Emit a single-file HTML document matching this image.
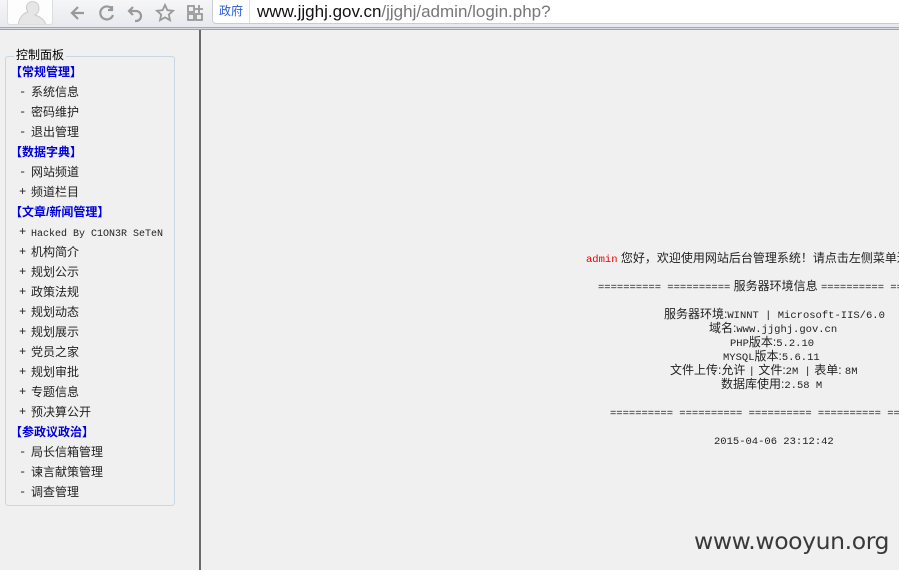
<!DOCTYPE html>
<html><head><meta charset="utf-8"><style>
*{margin:0;padding:0;box-sizing:border-box}
body{width:899px;height:570px;overflow:hidden;background:#f0f0f0;position:relative;font-family:"Liberation Sans","Noto Sans CJK SC",sans-serif;}
.tb{position:absolute;left:0;top:0;width:899px;height:28px;background:linear-gradient(#f6f6f8,#e8e9ee);border-bottom:1px solid #a8a8b0}
.tb2{position:absolute;left:0;top:28px;width:899px;height:2px;background:#d8dce2;border-bottom:1px solid #a0a0a8}
.av{position:absolute;left:7px;top:0;width:46px;height:25px;background:#fdfdfd;border:1px solid #ddd;border-top:none;border-radius:0 0 3px 3px;overflow:hidden}
.addr{position:absolute;left:212px;top:0;width:700px;height:24px;background:#fff;border:1px solid #c8ccd4;border-top:none;border-radius:0 0 0 4px}
.gov{position:absolute;left:0;top:0;width:37px;height:23px;border-right:1px solid #dde;font-size:12px;color:#2a5bd7;line-height:23px;text-align:center}
.url{position:absolute;left:44px;top:1px;font-size:17px;color:#111;line-height:22px;white-space:pre}
.url span{color:#777}
.ic{position:absolute;top:3px}
.div{position:absolute;left:199px;top:30px;width:2px;height:540px;background:#6a6a6a}
.panel{position:absolute;left:5px;top:56px;width:170px;height:450px;border:1px solid #c9d6e4;border-radius:3px}
.leg{position:absolute;left:14px;top:47px;font-size:12px;background:#f0f0f0;padding:0 2px;color:#000;line-height:16px}
.m{position:absolute;left:31px;font-size:12px;line-height:20px;white-space:pre;color:#222}
.m i{position:absolute;left:-12px;top:0;font-style:normal;font-family:"Liberation Mono",monospace}
.h{color:#0000dd;font-weight:bold;left:10px}
.mono{font-family:"Liberation Mono",monospace;font-size:10px}
.c{position:absolute;white-space:pre;font-size:12px;line-height:14px;color:#222}
.mo{font-family:"Liberation Mono","Noto Sans CJK SC",monospace;font-size:10.5px}
.wm{position:absolute;left:694px;top:527px;font-size:23.5px;color:#3a3a3a;font-family:"DejaVu Sans","Liberation Sans",sans-serif;letter-spacing:-0.4px}
</style></head><body>
<div class="tb"></div><div class="tb2"></div>
<div class="av"><svg width="46" height="25"><path d="M10 25 Q12 14 20 12 Q16 6 22 2 Q30 0 31 8 Q31 13 27 15 Q36 18 38 25Z" fill="#e6e6e6" stroke="#ccc"/></svg></div>
<svg class="ic" style="left:68px" width="20" height="20" fill="none" stroke="#999" stroke-width="2.2"><path d="M16 10H5M10 4L4 10l6 6"/></svg>
<svg class="ic" style="left:97px" width="20" height="20" fill="none" stroke="#999" stroke-width="2.2"><path d="M15 6A6.5 6.5 0 1 0 16 12M15 3v4h-4"/></svg>
<svg class="ic" style="left:126px" width="20" height="20" fill="none" stroke="#999" stroke-width="2.2"><path d="M7 4L3 8l4 4M3 8h7a5 5 0 0 1 0 10H9"/></svg>
<svg class="ic" style="left:155px" width="20" height="20" fill="none" stroke="#999" stroke-width="1.8"><path d="M10 2l2.4 5.2 5.6.6-4.2 3.8 1.2 5.6L10 14.4 5 17.2l1.2-5.6L2 7.8l5.6-.6z"/></svg>
<svg class="ic" style="left:185px" width="20" height="20" fill="none" stroke="#999" stroke-width="1.8"><rect x="3" y="3" width="6" height="6"/><rect x="3" y="11" width="6" height="6"/><rect x="11" y="11" width="6" height="6"/><path d="M14 2v8M10 6h8"/></svg>
<div class="addr"><div class="gov">政府</div><div class="url">www.jjghj.gov.cn<span>/jjghj/admin/login.php?</span></div></div>
<div class="div"></div>
<div class="panel"></div>
<div class="leg">控制面板</div>
<div class="m h" style="top:62px">【常规管理】</div>
<div class="m" style="top:82px"><i>-</i>系统信息</div>
<div class="m" style="top:102px"><i>-</i>密码维护</div>
<div class="m" style="top:122px"><i>-</i>退出管理</div>
<div class="m h" style="top:142px">【数据字典】</div>
<div class="m" style="top:162px"><i>-</i>网站频道</div>
<div class="m" style="top:182px"><i>+</i>频道栏目</div>
<div class="m h" style="top:202px">【文章/新闻管理】</div>
<div class="m" style="top:222px"><i>+</i><span class="mono">Hacked By C1ON3R SeTeN</span></div>
<div class="m" style="top:242px"><i>+</i>机构简介</div>
<div class="m" style="top:262px"><i>+</i>规划公示</div>
<div class="m" style="top:282px"><i>+</i>政策法规</div>
<div class="m" style="top:302px"><i>+</i>规划动态</div>
<div class="m" style="top:322px"><i>+</i>规划展示</div>
<div class="m" style="top:342px"><i>+</i>党员之家</div>
<div class="m" style="top:362px"><i>+</i>规划审批</div>
<div class="m" style="top:382px"><i>+</i>专题信息</div>
<div class="m" style="top:402px"><i>+</i>预决算公开</div>
<div class="m h" style="top:422px">【参政议政治】</div>
<div class="m" style="top:442px"><i>-</i>局长信箱管理</div>
<div class="m" style="top:462px"><i>-</i>谏言献策管理</div>
<div class="m" style="top:482px"><i>-</i>调查管理</div>

<div class="c" style="left:586px;top:251px"><span class="mo" style="color:#e00">admin</span> 您好，欢迎使用网站后台管理系统！请点击左侧菜单进行操作</div>
<div class="c" style="left:598px;top:279px"><span class="mo">========== ==========</span> 服务器环境信息 <span class="mo">========== ==========</span></div>
<div class="c" style="left:664px;top:307px">服务器环境:<span class="mo">WINNT | Microsoft-IIS/6.0</span></div>
<div class="c" style="left:709px;top:321px">域名:<span class="mo">www.jjghj.gov.cn</span></div>
<div class="c" style="left:730px;top:335px"><span class="mo">PHP</span>版本:<span class="mo">5.2.10</span></div>
<div class="c" style="left:723px;top:349px"><span class="mo">MYSQL</span>版本:<span class="mo">5.6.11</span></div>
<div class="c" style="left:670px;top:363px">文件上传:允许 <span class="mo">|</span> 文件:<span class="mo">2M |</span> 表单: <span class="mo">8M</span></div>
<div class="c" style="left:721px;top:377px">数据库使用:<span class="mo">2.58 M</span></div>
<div class="c" style="left:610px;top:405px"><span class="mo">========== ========== ========== ========== ==========</span></div>
<div class="c" style="left:714px;top:433px"><span class="mo">2015-04-06 23:12:42</span></div>
<div class="wm">www.wooyun.org</div>
</body></html>
